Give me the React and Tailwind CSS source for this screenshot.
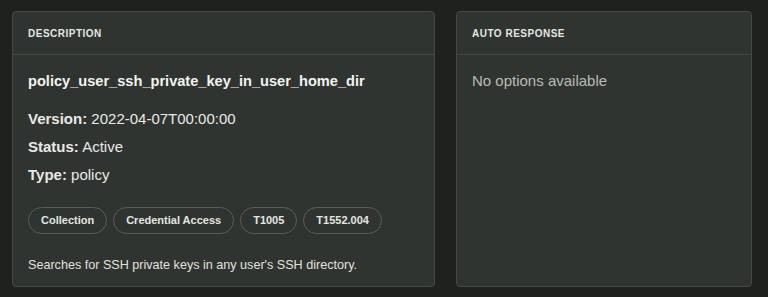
export default function App() {
  const tags = ["Collection", "Credential Access", "T1005", "T1552.004"];
  return (
    <div className="w-[768px] h-[297px] bg-[#1e211d] flex gap-[21px] pl-[12px] pr-[16px] pt-[11px] pb-[10px]" style={{ fontFamily: '"Liberation Sans", Arial, sans-serif' }}>
      <div className="w-[423px] flex flex-col rounded-[4px] border border-[#464a44] bg-[#303430]">
        <div className="h-[43px] border-b border-[#464a44] flex items-center px-[15px] text-[10px] font-bold tracking-[0.5px] text-[#e4e6e2]">
          DESCRIPTION
        </div>
        <div className="flex flex-col px-[15px] pt-[16px]">
          <div className="text-[14.6px] font-bold text-[#f2f3f0] leading-[20px]">policy_user_ssh_private_key_in_user_home_dir</div>
          <div className="mt-[18px] flex flex-col gap-[8px] text-[15px] text-[#e8e9e6] leading-[20px]">
            <div><span className="font-bold">Version:</span> 2022-04-07T00:00:00</div>
            <div><span className="font-bold">Status:</span> Active</div>
            <div><span className="font-bold">Type:</span> policy</div>
          </div>
          <div className="mt-[22px] flex gap-[6px]">
            {tags.map((t) => (
              <div key={t} className="h-[27px] px-[12px] rounded-full border border-[#5a5e57] flex items-center text-[11px] font-bold text-[#e4e6e2]">
                {t}
              </div>
            ))}
          </div>
          <div className="mt-[23px] text-[12.6px] text-[#e0e2de] leading-[16px]">Searches for SSH private keys in any user's SSH directory.</div>
        </div>
      </div>
      <div className="flex-1 flex flex-col rounded-[4px] border border-[#464a44] bg-[#303430]">
        <div className="h-[43px] border-b border-[#464a44] flex items-center px-[15px] text-[10px] font-bold tracking-[0.5px] text-[#e4e6e2]">
          AUTO RESPONSE
        </div>
        <div className="px-[15px] pt-[16px] text-[15px] text-[#b9bcb6] leading-[20px]">No options available</div>
      </div>
    </div>
  );
}
